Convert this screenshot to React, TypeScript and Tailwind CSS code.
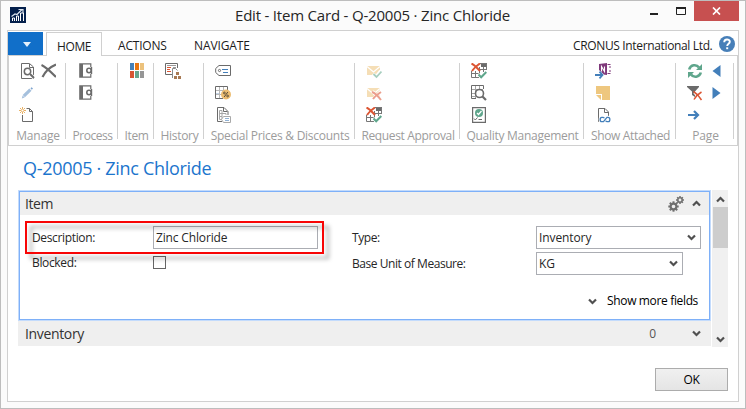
import type { ReactNode } from 'react';

const GRAY = '#6b6b6b';
const BLUE = '#437fba';
const GREEN = '#5fa68c';
const RED = '#dc5533';

function Icon({ children, className = '' }: { children: ReactNode; className?: string }) {
  return (
    <svg viewBox="0 0 16 16" fill="none" className={`h-4 w-4 shrink-0 ${className}`}>
      {children}
    </svg>
  );
}

function ViewIcon() {
  return (
    <Icon>
      <path d="M1.5 .5H9.5L13.5 4V15.5H1.5Z" stroke={GRAY} />
      <path d="M9.5 1V4.5H13" stroke={GRAY} />
      <circle cx="7.5" cy="8.5" r="3.2" fill="#fff" stroke={GRAY} strokeWidth="1.5" />
      <path d="M10 11L14 15" stroke="#fff" strokeWidth="3.5" />
      <path d="M9.8 10.8L14 15" stroke={GRAY} strokeWidth="2" />
    </Icon>
  );
}

function DeleteIcon() {
  return (
    <Icon>
      <path d="M1.5 2C5 3.5 12 10 16 14M16 1.5C10 4 5 9 2.5 14" stroke={GRAY} strokeWidth="2.2" />
    </Icon>
  );
}

function PencilIcon() {
  return (
    <Icon>
      <path d="M3.8 11.2L10.4 4.6" stroke="#a5c0dd" strokeWidth="3.2" />
      <path d="M10.5 3.2L11.6 2.2L13 3.6L11.8 4.7Z" fill="#7fa5cf" />
      <path d="M2.6 10.5L4.7 12.6L1.8 13.6Z" fill="#a5c0dd" />
    </Icon>
  );
}

function NewIcon() {
  return (
    <Icon>
      <path d="M7.5 1.5H10.5L13.5 4.5V14.5H3.5V8" stroke={GRAY} />
      <path d="M10.5 1.5V4.5H13.5" stroke={GRAY} />
      <path d="M3.5 0V7M0 3.5H7M1 1L6 6M6 1L1 6" stroke="#e9b266" />
      <path d="M2.5 2.5h2v2h-2Z" fill="#fff" />
    </Icon>
  );
}

function ProcessIcon() {
  return (
    <Icon>
      <path d="M.8 .8H11.8V14.2H.8Z" stroke={GRAY} strokeWidth="1.2" />
      <path d="M1 1H4V14H1Z" fill={GRAY} />
      <path d="M9 4H13V11H9Z" fill="#fff" />
      <circle cx="10" cy="7.5" r="2.2" stroke={GRAY} strokeWidth="1.6" />
      <path d="M12.5 4V11" stroke={GRAY} strokeWidth="1.4" />
    </Icon>
  );
}

function ItemIcon() {
  return (
    <Icon>
      <path d="M1 0h4v7H1Z" fill="#4580b8" />
      <path d="M6 0h4v7H6Z" fill="#e9750f" />
      <path d="M11 0h4v7h-4Z" fill="#ecc27c" />
      <path d="M1 8h4v7H1Z" fill="#d75532" />
      <path d="M6 8h4v7H6Z" fill="#67a58c" />
      <path d="M11 8h4v7h-4Z" fill="#969696" />
    </Icon>
  );
}

function HistoryIcon() {
  return (
    <Icon>
      <path d="M7 11.5H.5V.5H12.5V5" stroke={GRAY} />
      <path d="M2 2.5H11M8 4.5H11" stroke="#9a9a9a" />
      <path d="M2 4.5H6M2 6.5H5M2 8.5H6" stroke={RED} />
      <path d="M7.5 15V5.5H10.5L12.5 7.5" stroke="#8a8a8a" />
      <path d="M11 9h3v3h-3ZM9 13h3v3H9ZM13 13h3v3h-3Z" fill="#a87953" />
    </Icon>
  );
}

function TagIcon() {
  return (
    <Icon>
      <path d="M4 2.5H15.5V12.5H4L.7 9.5V5.5Z" stroke={GRAY} />
      <circle cx="4.5" cy="7.5" r="1.1" stroke={GRAY} />
      <path d="M7 6.5H13M8 9.5H13" stroke={BLUE} />
    </Icon>
  );
}

function DiscountIcon() {
  return (
    <Icon>
      <path d="M1 8h4v2H1Z" fill="#c2d3e7" />
      <path d="M4.5 2V13M8.5 2V13M1 5.5H12M1 9.5H9" stroke="#b8b8b8" />
      <path d="M8 13.5H.5V1.5H12.5V5" stroke={GRAY} />
      <circle cx="11" cy="9.5" r="5" fill="#ecbd72" />
      <path d="M9.2 12L12.8 7" stroke="#443d32" strokeWidth=".9" />
      <circle cx="9.4" cy="8" r=".9" stroke="#443d32" strokeWidth=".8" />
      <circle cx="12.6" cy="11" r=".9" stroke="#443d32" strokeWidth=".8" />
    </Icon>
  );
}

function PriceListIcon() {
  return (
    <Icon>
      <path d="M7 14.5H2.5V.5H9L13 4.5V8" stroke={GRAY} />
      <path d="M8.5 1V4.5H12.5" stroke={GRAY} />
      <path d="M4.5 3.5H7V12.5H4.5ZM4.5 6.5H11V8M4.5 9.5H7" stroke="#a6a6a6" />
      <path d="M8.5 9.5H15.5V15.5H8.5L6.5 12.5Z" fill="#fff" stroke="#a9a9a9" />
      <path d="M10 11.5H14M10 13.5H14" stroke="#90b1d4" />
    </Icon>
  );
}

function EnvelopeIcon({ rejected = false }: { rejected?: boolean }) {
  return (
    <Icon>
      <path d="M1 3H14V12H1Z" fill="#f5deb6" />
      <path d="M1 3.5L7.5 9L14 3.5" stroke="#fff" strokeWidth="1.2" />
      {rejected ? (
        <>
          <path d="M6.5 6.5L15 15M15 6.5L6.5 15" stroke="#fff" strokeWidth="3.5" />
          <path d="M6 7C9 8 12 11 15 15M15 7C12 9 9 11 7 14" stroke="#eb9f8d" strokeWidth="2" />
        </>
      ) : (
        <>
          <path d="M7 11L10 14.5L15 8" stroke="#fff" strokeWidth="4" />
          <path d="M7.5 11L10.5 14L15.5 8.5" stroke="#a7cebf" strokeWidth="1.8" />
        </>
      )}
    </Icon>
  );
}

function ApprovalGridIcon() {
  return (
    <Icon>
      <path d="M10 0h6v4h-6Z" fill={GRAY} />
      <path d="M9 .5H15.5V7M.5 8V14.5H8M4.5 8V14M8.5 4V14M12.5 4V9M1 10.5H9M9 6.5H15" stroke="#777" />
      <path d="M.5 .5C4 2 6 5 9 8M9 .5C5 3 3 5 1 8" stroke={RED} strokeWidth="2" />
      <path d="M7 11L10.3 14.5L15.5 8.5" stroke="#fff" strokeWidth="3.2" />
      <path d="M7.5 11.5L10.2 14.3L15.3 9" stroke={GREEN} strokeWidth="2" />
    </Icon>
  );
}

function TestGridIcon() {
  return (
    <Icon>
      <path d="M4.5 1V13M8.5 1V5M12.5 1V4M1 4.5H12M1 8.5H4M1 11.5H5" stroke="#a5a5a5" />
      <path d="M5 13.5H.5V.5H12.5V4" stroke={GRAY} />
      <circle cx="8.5" cy="8.5" r="4" fill="#fff" stroke={GRAY} strokeWidth="1.6" />
      <path d="M11.5 11.5L15 15" stroke={GRAY} strokeWidth="2.2" />
    </Icon>
  );
}

function CertificateIcon() {
  return (
    <Icon>
      <path d="M1.6 .6H14.4V15.4H1.6Z" stroke={GRAY} strokeWidth="1.2" />
      <circle cx="8" cy="6" r="4" fill={GREEN} />
      <path d="M6 6L7.5 7.5L10.5 4" stroke="#fff" strokeWidth="1.2" />
      <path d="M3 11.5L4.3 13L6.5 10.5M7.5 12.5H11" stroke={GRAY} />
    </Icon>
  );
}

function OneNoteIcon() {
  return (
    <Icon>
      <path d="M4 1L12 0V12L4 11Z" fill="#7f397b" />
      <path d="M12.5 1.5H15.5M12.5 10.5H15.5M15 3V5M15 7V9" stroke="#7f397b" />
      <path d="M6.5 8.5V3.5L9.5 8.5V3.5" stroke="#fff" strokeWidth="1.1" />
      <path d="M0 9.5H4V7L9 11.5L4 15.5V13H0Z" fill="#fff" />
      <path d="M0 12H7M4.5 8.7L7.5 12L4.5 15.3" stroke={BLUE} strokeWidth="1.8" />
    </Icon>
  );
}

function NoteIcon() {
  return (
    <Icon>
      <path d="M1 1H15V15H7V9H1Z" fill="#eec77f" />
      <path d="M1 10H6V15Z" fill="#eec77f" />
    </Icon>
  );
}

function LinkIcon() {
  return (
    <Icon>
      <path d="M5 14.5H3.5V1.5H10L13.5 5V9" stroke={GRAY} />
      <path d="M9.5 2V5.5H13.5" stroke={GRAY} />
      <path d="M9.5 11L8 10.3H6.8C4.6 10.3 4.6 14.7 6.8 14.7H8.5L12 10.3H13.2C15.4 10.3 15.4 14.7 13.2 14.7H12L10.5 14" stroke="#fff" strokeWidth="3" />
      <path d="M9.5 11L8 10.3H6.8C4.6 10.3 4.6 14.7 6.8 14.7H8.5L12 10.3H13.2C15.4 10.3 15.4 14.7 13.2 14.7H12L10.5 14" stroke={BLUE} strokeWidth="1.3" />
    </Icon>
  );
}

function RefreshIcon() {
  return (
    <Icon>
      <path d="M2.2 6.5C3.5 1.5 9.5 1 12 4.5M13.8 9.5C12.5 14.5 6.5 15 4 11.5" stroke={GREEN} strokeWidth="2.6" />
      <path d="M15 1V7H9ZM1 15V9H7Z" fill={GREEN} />
    </Icon>
  );
}

function ClearFilterIcon() {
  return (
    <Icon>
      <path d="M0 1H12V2L8 6.5V12L5 10V6.5L0 2Z" fill={GRAY} />
      <path d="M7.5 7.5L15 15M15 7L7 15" stroke="#fff" strokeWidth="3" />
      <path d="M6.5 6.5C9 8 12 11 14.5 15M14.5 7C11 9 9 11 7 14.5" stroke={RED} strokeWidth="1.5" />
    </Icon>
  );
}

function GoToIcon() {
  return (
    <Icon>
      <path d="M1 8H11M7 4L11 8L7 12" stroke={BLUE} strokeWidth="2.2" />
    </Icon>
  );
}

function PreviousIcon() {
  return (
    <Icon>
      <path d="M9.5 2V14L1.5 8Z" fill={BLUE} />
    </Icon>
  );
}

function NextIcon() {
  return (
    <Icon>
      <path d="M1.5 2V14L9.5 8Z" fill={BLUE} />
    </Icon>
  );
}

function Chevron({ up = false, className = '' }: { up?: boolean; className?: string }) {
  return (
    <svg viewBox="0 0 9 7" fill="none" className={`h-[7px] w-[9px] shrink-0 ${up ? 'rotate-180' : ''} ${className}`}>
      <path d="M1 1.5L4.5 5L8 1.5" stroke="#505050" strokeWidth="2.2" />
    </svg>
  );
}

function Gear({ x, y, r }: { x: number; y: number; r: number }) {
  return (
    <g transform={`translate(${x} ${y})`} stroke="#707070">
      <circle r={r * 0.55} strokeWidth={r * 0.4} />
      {[0, 45, 90, 135, 180, 225, 270, 315].map((a) => (
        <path key={a} d={`M0 ${-r * 0.65}V${-r}`} strokeWidth={r * 0.38} transform={`rotate(${a})`} />
      ))}
    </g>
  );
}

function Group({ className, labelClass, label, children }: { className: string; labelClass: string; label: string; children: ReactNode }) {
  return (
    <section className={`flex h-[76px] shrink-0 flex-col justify-between border-r border-[#d0d0d0] ${className}`}>
      <div className="flex h-[60px] flex-col gap-1.5">{children}</div>
      <div className={`h-4 pl-[2px] text-center text-[12px] leading-[25px] whitespace-nowrap text-[#9c9c9c] ${labelClass}`}>{label}</div>
    </section>
  );
}

function Field({ className, children }: { className: string; children: ReactNode }) {
  return <div className={`flex h-[23px] items-center border border-[#abadb3] bg-white pl-0.5 ${className}`}>{children}</div>;
}

function TitleBar() {
  return (
    <header className="flex h-[29px] shrink-0 items-start">
      <svg viewBox="0 0 16 16" fill="none" className="mt-1.5 ml-[9px] h-4 w-4">
        <path d="M0 0H16V16H0Z" fill="#04204c" />
        <path d="M2.5 14V11H4.5V14M6.5 14V9H8.5V14M10.5 14V6H13.5V14" stroke="#fff" />
        <path d="M1.5 9.5L5 7L7 7.5L12 2.5M8.5 2.5H13V6" stroke="#dce4ee" strokeWidth="1.2" />
      </svg>
      <h1 className="ml-[209px] w-[400px] text-[15px] leading-[29px] tracking-[-0.2px] whitespace-nowrap text-[#262626]">
        Edit - Item Card - Q-20005 · Zinc Chloride
      </h1>
      <div className="ml-auto flex pr-1.5">
        <svg viewBox="0 0 44 19" className="h-[19px] w-[44px]" fill="none">
          <path d="M0 13H8" stroke="#222" strokeWidth="2" />
          <path d="M26.5 6.5H35.5V13.5H26.5Z" stroke="#222" />
          <path d="M26 7H36" stroke="#222" strokeWidth="2" />
        </svg>
        <div className="flex h-5 w-[45px] items-center justify-center bg-[#c75050]">
          <svg viewBox="0 0 9 8" className="h-2 w-[9px]" fill="none">
            <path d="M1 .5L8 7.5M8 .5L1 7.5" stroke="#fff" strokeWidth="1.7" />
          </svg>
        </div>
      </div>
    </header>
  );
}

function TabBar() {
  return (
    <nav className="flex h-[25px] shrink-0 items-end border-b border-[#d0d0d0] text-[12px] text-[#1c1c1c]">
      <div className="flex h-[23px] w-[35px] items-center justify-center bg-[#116fc9]">
        <svg viewBox="0 0 8 5" className="mt-0.5 ml-0.5 h-[5px] w-2">
          <path d="M0 0H8L4 5Z" fill="#e6f1fc" />
        </svg>
      </div>
      <div className="-mb-px ml-[3px] h-6 w-14 border border-b-0 border-[#d0d0d0] bg-white pl-2.5 leading-[27px] tracking-[-0.4px]">HOME</div>
      <div className="ml-4 h-6 w-[76px] leading-[29px] tracking-[-0.2px]">ACTIONS</div>
      <div className="h-6 leading-[29px] tracking-[-0.1px]">NAVIGATE</div>
      <div className="ml-auto h-6 w-[146px] leading-[29px] tracking-[-0.35px] whitespace-nowrap">CRONUS International Ltd.</div>
      <svg viewBox="0 0 16 16" className="mr-[3px] mb-[3px] h-4 w-4">
        <circle cx="8" cy="8" r="8" fill="#477fb8" />
        <path d="M5.2 6.2C5.2 2.6 10.8 2.6 10.8 5.8C10.8 7.8 8.2 7.8 8.2 10" fill="none" stroke="#fff" strokeWidth="1.9" />
        <path d="M7.2 11.3H9.2V13.2H7.2Z" fill="#fff" />
      </svg>
    </nav>
  );
}

function Ribbon() {
  return (
    <div className="flex h-[90px] shrink-0 border-x border-b border-[#d0d0d0] pt-[7px]">
      <Group label="Manage" className="w-[57px]" labelClass="tracking-[-0.2px]">
        <div className="flex gap-1 pl-[11px]"><ViewIcon /><DeleteIcon /></div>
        <div className="pl-[11px]"><PencilIcon /></div>
        <div className="pl-[10px]"><NewIcon /></div>
      </Group>
      <Group label="Process" className="w-[52px]" labelClass="tracking-[-0.45px]">
        <div className="pl-[13px]"><ProcessIcon /></div>
        <div className="pl-[13px]"><ProcessIcon /></div>
      </Group>
      <Group label="Item" className="w-9" labelClass="tracking-[-0.4px]">
        <div className="pl-[11px]"><ItemIcon /></div>
      </Group>
      <Group label="History" className="w-[50px]" labelClass="tracking-[-0.3px]">
        <div className="pl-[11px]"><HistoryIcon /></div>
      </Group>
      <Group label="Special Prices & Discounts" className="w-[151px]" labelClass="tracking-[-0.27px]">
        <div className="pl-[11px]"><TagIcon /></div>
        <div className="pl-[11px]"><DiscountIcon /></div>
        <div className="pl-[11px]"><PriceListIcon /></div>
      </Group>
      <Group label="Request Approval" className="w-[105px]" labelClass="tracking-[-0.35px]">
        <div className="pl-[11px]"><EnvelopeIcon /></div>
        <div className="pl-[11px]"><EnvelopeIcon rejected /></div>
        <div className="pl-[11px]"><ApprovalGridIcon /></div>
      </Group>
      <Group label="Quality Management" className="w-[124px]" labelClass="tracking-[-0.27px]">
        <div className="pl-[11px]"><ApprovalGridIcon /></div>
        <div className="pl-[11px]"><TestGridIcon /></div>
        <div className="pl-[11px]"><CertificateIcon /></div>
      </Group>
      <Group label="Show Attached" className="w-[92px]" labelClass="tracking-[-0.35px]">
        <div className="pl-[11px]"><OneNoteIcon /></div>
        <div className="pl-[11px]"><NoteIcon /></div>
        <div className="pl-[11px]"><LinkIcon /></div>
      </Group>
      <Group label="Page" className="w-[58px]" labelClass="tracking-[-0.2px]">
        <div className="flex gap-2 pl-[11px]"><RefreshIcon /><PreviousIcon /></div>
        <div className="flex gap-2 pl-[11px]"><ClearFilterIcon /><NextIcon /></div>
        <div className="pl-[11px]"><GoToIcon /></div>
      </Group>
    </div>
  );
}

function ItemPanel() {
  return (
    <section className="relative h-[131px] border border-[#c3dbfc]">
      <div className="h-[129px] border border-[#7eb0f8] bg-white">
        <div className="flex h-[23px] items-center bg-[#efefef] pl-[5px]">
          <h3 className="text-[14px] leading-5 tracking-[-0.4px] text-[#333]">Item</h3>
          <svg viewBox="0 0 16 16" fill="none" className="mr-2 ml-auto h-4 w-4">
            <Gear x={5.5} y={10.5} r={5.2} />
            <Gear x={12} y={4} r={4} />
          </svg>
          <Chevron up className="mr-2" />
        </div>
        <div className="flex pt-[11px] text-[12px] leading-[23px] text-[#262626]">
          <div className="w-[320px] pl-3">
            <div className="flex">
              <span className="w-[121px] tracking-[-0.35px]">Description:</span>
              <Field className="w-[165px] tracking-[-0.15px]">Zinc Chloride</Field>
            </div>
            <div className="mt-0.5 flex items-center">
              <span className="w-[121px] tracking-[-0.35px]">Blocked:</span>
              <span className="h-[13px] w-[13px] border border-[#666] bg-white" />
            </div>
          </div>
          <div className="pl-3">
            <div className="flex">
              <span className="w-[184px] tracking-[-0.4px]">Type:</span>
              <Field className="w-[165px] justify-between pr-1 tracking-[-0.1px]">Inventory<Chevron /></Field>
            </div>
            <div className="mt-[3px] flex">
              <span className="w-[184px] tracking-[-0.45px]">Base Unit of Measure:</span>
              <Field className="w-[147px] justify-between pr-1 tracking-[-0.1px]">KG<Chevron /></Field>
            </div>
          </div>
        </div>
        <div className="mt-3.5 flex h-6 items-center justify-end gap-2.5 pr-[11px] text-[12px] tracking-[-0.35px] text-black">
          <Chevron />
          <span>Show more fields</span>
        </div>
      </div>
      <div className="absolute top-[30px] left-1.5 h-[33px] w-[299px] border-2 border-[#f80505] drop-shadow-[5px_5px_2px_rgba(0,0,0,0.35)]" />
    </section>
  );
}

function ScrollBar() {
  return (
    <div className="flex h-[157px] w-4 flex-col items-center bg-[#f0f0f0]">
      <div className="flex h-[17px] items-center pt-0.5"><Chevron up /></div>
      <div className="h-[41px] w-[15px] bg-[#cdcdcd]" />
      <div className="mt-auto flex h-[17px] items-center pt-0.5"><Chevron /></div>
    </div>
  );
}

export default function App() {
  return (
    <div className="flex h-[409px] w-[746px] flex-col border border-[#bdbdbd] bg-[#fbfbfb] font-['Open_Sans','Noto_Sans',sans-serif]">
      <TitleBar />
      <main className="ml-1.5 flex h-[372px] w-[732px] flex-col border border-[#d0d0d0] bg-white">
        <TabBar />
        <Ribbon />
        <h2 className="mt-2 h-9 pl-[15px] text-[18px] leading-[29px] tracking-[-0.3px] text-[#1c75cd]">Q-20005 · Zinc Chloride</h2>
        <div className="flex gap-px pl-2.5">
          <div className="w-[693px]">
            <ItemPanel />
            <div className="flex h-[25px] items-center bg-[#efefef] pl-[7px]">
              <h3 className="text-[14px] leading-5 tracking-[-0.35px] text-[#333]">Inventory</h3>
              <span className="mr-9 ml-auto text-[12px] text-[#555]">0</span>
              <Chevron className="mr-2.5" />
            </div>
          </div>
          <ScrollBar />
        </div>
        <div className="mt-[21px] mr-2.5 flex h-[23px] w-[73px] items-center justify-center self-end border border-[#acacac] bg-linear-to-b from-[#f0f0f0] to-[#e5e5e5] text-[12px] tracking-[-0.3px] text-black">
          OK
        </div>
      </main>
    </div>
  );
}
